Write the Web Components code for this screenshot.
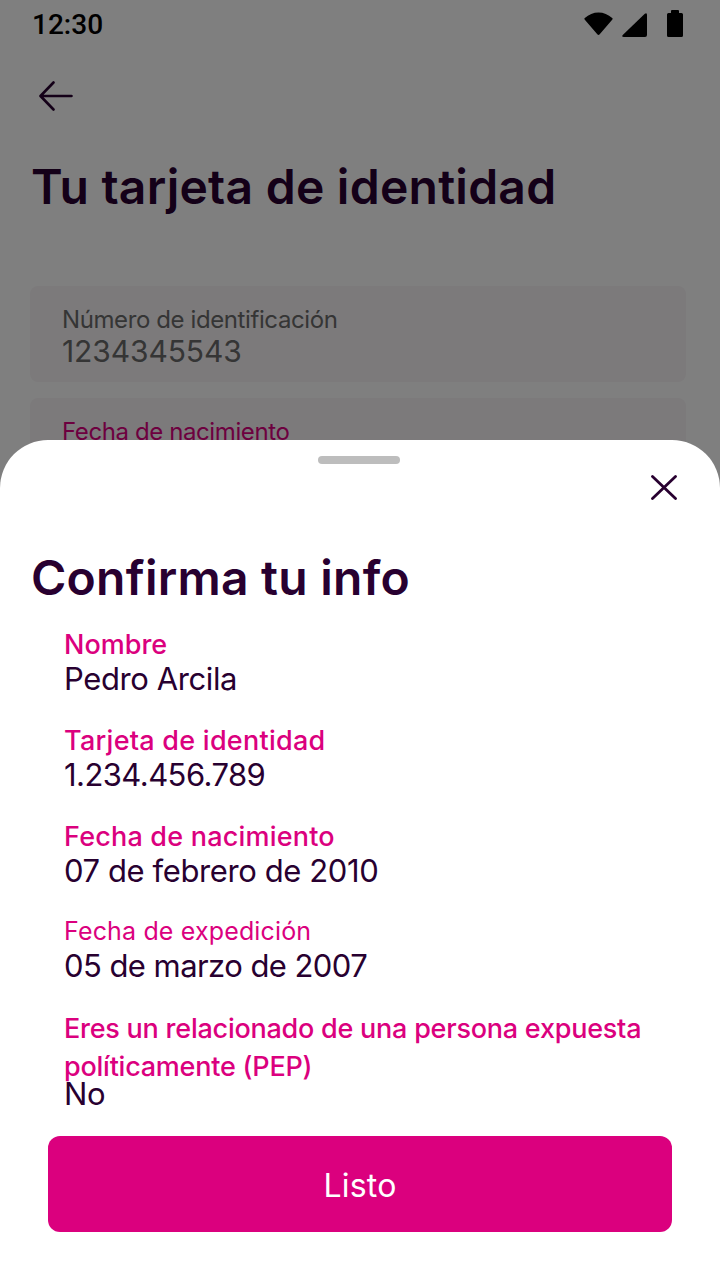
<!DOCTYPE html>
<html lang="es"><head><meta charset="utf-8"><title>Tu tarjeta de identidad</title>
<style>
html,body{margin:0;padding:0;background:#fff}
body{width:720px;height:1280px;overflow:hidden;position:relative;font-family:Inter,"Noto Sans",sans-serif;color:#280030}
</style></head><body>
<id-screen></id-screen>
<confirm-sheet>
  <info-row label="Nombre" value="Pedro Arcila"></info-row>
  <info-row ls=".25" vls="-.56" label="Tarjeta de identidad" value="1.234.456.789"></info-row>
  <info-row ls=".2" label="Fecha de nacimiento" value="07 de febrero de 2010"></info-row>
  <info-row small ls=".15" vls="-.56" label="Fecha de expedición" value="05 de marzo de 2007"></info-row>
  <info-row tight ls="-.24" label="Eres un relacionado de una persona expuesta políticamente (PEP)" value="No"></info-row>
</confirm-sheet>
<script>
function def(name,html,init){
  customElements.define(name,class extends HTMLElement{
    constructor(){super();this.attachShadow({mode:'open'}).innerHTML=html;}
    connectedCallback(){init&&init(this,this.shadowRoot);}
  });
}
def('status-bar',`<style>
:host{display:flex;align-items:flex-start;justify-content:space-between;height:48px;padding:0 37px 0 32px}
span{font:500 28px/50px Roboto,sans-serif;color:#000}
.ic{display:flex;align-items:flex-start}
svg{display:block}
</style><span>12:30</span><div class="ic">
<svg width="29" height="23" viewBox="0 0 29 23" style="margin-top:12px"><path d="M.6 7.400Q.1 6.700 .8 6.100C4.800 2.300 9.400 .4 14.500 .4S24.200 2.300 28.200 6.100Q28.900 6.700 28.400 7.400L15.700 22.300Q14.500 23.600 13.300 22.300Z" fill="#000"/></svg>
<svg width="25" height="24" viewBox="0 0 25 24" style="margin:13px 0 0 9px"><path d="M22.800 .7Q25 -.8 25 2V22Q25 24 23 24H2Q-1 24 1 21.800Z" fill="#000"/></svg>
<svg width="16" height="27" viewBox="0 0 16 27" style="margin:10px 0 0 20px"><path d="M4 3V1Q4 0 5 0H11Q12 0 12 1V3H14.500Q16 3 16 4.500V25.500Q16 27 14.500 27H1.500Q0 27 0 25.500V4.500Q0 3 1.500 3Z" fill="#000"/></svg>
</div>`);
def('info-field',`<style>
:host{display:block;background:#f8f5f7;border-radius:8px;padding:19px 32px 0;height:96px;box-sizing:border-box;margin:0 34px 16px 30px}
.l{font:400 24px/30px var(--f);color:var(--lc,#6b6b6b);white-space:nowrap;letter-spacing:-.4px}
.v{font:400 30px/32px var(--f);color:#6b6b6b;white-space:nowrap;letter-spacing:-.1px}
</style><div class="l"></div><div class="v"></div>`,(h,s)=>{
  s.querySelector('.l').textContent=h.getAttribute('label');
  s.querySelector('.v').textContent=h.getAttribute('value')||'';
  if(h.hasAttribute('accent'))h.style.setProperty('--lc','#db007e');
});
def('id-screen',`<style>
:host{display:block;--f:Inter,"Noto Sans",sans-serif}
.back{display:block;margin:33px 0 0 39px}
h1{margin:44px 0 67px 31px;font:600 48px/64px var(--f);color:#280030;white-space:nowrap;letter-spacing:.25px}
</style><status-bar></status-bar>
<svg class="back" width="34" height="30" viewBox="0 0 34 30"><path d="M32.500 15H2M14.500 1.500L1.500 15L14.500 28.500" fill="none" stroke="#280030" stroke-width="2.600" stroke-linecap="round" stroke-linejoin="round"/></svg>
<h1>Tu tarjeta de identidad</h1>
<info-field label="Número de identificación" value="1234345543"></info-field>
<info-field accent label="Fecha de nacimiento"></info-field>`);
def('confirm-sheet',`<style>
:host{position:absolute;inset:0;display:flex;flex-direction:column;justify-content:flex-end;background:rgba(0,0,0,.5);--f:Inter,"Noto Sans",sans-serif}
.sheet{background:#fff;height:840px;border-radius:48px 48px 0 0;box-sizing:border-box;display:flex;flex-direction:column;position:relative}
.handle{width:82px;height:8px;border-radius:4px;background:#bdbdbd;margin:16px 0 0 318px;flex:none}
.close{display:block;position:absolute;top:35px;right:43px}
h2{margin:86px 0 0 31px;font:600 48px/56px var(--f);color:#280030;letter-spacing:.25px;white-space:nowrap}
.rows{margin:20px 0 0 64px;width:600px;flex:1}
button{all:unset;box-sizing:border-box;display:block;width:624px;height:96px;margin:0 48px 48px;background:#db007e;border-radius:12px;color:#fff;font:400 32px/100px var(--f);text-align:center;letter-spacing:.2px}
</style><div class="sheet"><div class="handle"></div>
<svg class="close" width="26" height="25" viewBox="0 0 26 25"><path d="M1.500 1.500L24.500 23.500M24.500 1.500L1.500 23.500" stroke="#280030" stroke-width="2.800" stroke-linecap="round" fill="none"/></svg>
<h2>Confirma tu info</h2><div class="rows"><slot></slot></div><button>Listo</button></div>`);
def('info-row',`<style>
:host{display:block;height:96px}
.l{font:500 27px/38px Inter,sans-serif;color:#db007e;letter-spacing:var(--ls,0)}
.v{font:400 31px/34px Inter,sans-serif;color:#280030;margin-top:-2px;white-space:nowrap;letter-spacing:var(--vls,-.4px)}
:host([small]){margin-top:-2px;margin-bottom:2px}
:host([small]) .l{font-size:25px;font-weight:400}
:host([small]) .v{margin-top:-1px}
:host([tight]){height:auto;margin-top:2px}
:host([tight]) .v{margin-top:-9px}
</style><div class="l"></div><div class="v"></div>`,(h,s)=>{
  s.querySelector('.l').textContent=h.getAttribute('label');
  s.querySelector('.v').textContent=h.getAttribute('value');
  if(h.hasAttribute('ls'))h.style.setProperty('--ls',h.getAttribute('ls')+'px');
  if(h.hasAttribute('vls'))h.style.setProperty('--vls',h.getAttribute('vls')+'px');
});
</script></body></html>
